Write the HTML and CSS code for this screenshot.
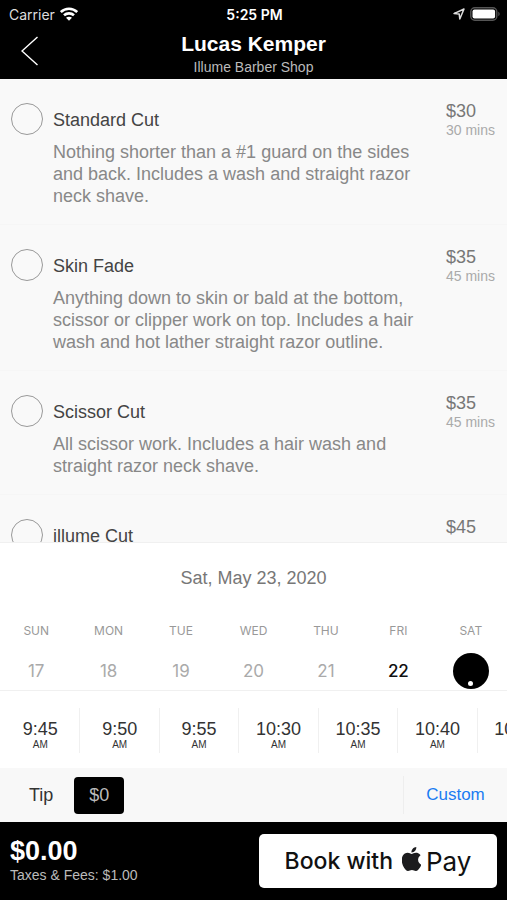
FILE: index.html
```html
<!DOCTYPE html>
<html lang="en">
<head>
<meta charset="utf-8">
<meta name="viewport" content="width=device-width, initial-scale=1">
<title>Lucas Kemper – Illume Barber Shop</title>
<link rel="stylesheet" href="styles.css">
</head>
<body>
<header class="header">
  <div class="status">
    <div class="status-side">
      <span>Carrier</span>
      <svg class="wifi" viewBox="0 0 18 14" aria-hidden="true">
        <g fill="none" stroke="#fff" stroke-width="2.6">
          <path d="M.8 5C5.400.600 12.600.600 17.200 5"/>
          <path d="M4 8.300c2.800-2.600 7.200-2.600 10 0"/>
        </g>
        <path fill="#fff" d="M9 13.700 6 10.800c1.600-1.500 4.400-1.500 6 0z"/>
      </svg>
    </div>
    <span class="clock">5:25 PM</span>
    <div class="status-side status-right">
      <svg class="location" viewBox="0 0 12 12" aria-hidden="true"><path d="M1 5.600 11 1 6.800 11 6.200 6z" fill="none" stroke="#ddd" stroke-width="1.500" stroke-linejoin="round"/></svg>
      <svg class="battery" viewBox="0 0 30 14" aria-hidden="true">
        <rect x=".8" y=".8" width="26" height="12.400" rx="4" fill="none" stroke="#555" stroke-width="1.400"/>
        <rect x="2.500" y="2.500" width="22.600" height="9" rx="2" fill="#fff"/>
        <path d="M28.300 4.800c1.800.7 1.800 3.700 0 4.400z" fill="#555"/>
      </svg>
    </div>
  </div>
  <div class="nav">
    <button class="back" type="button" aria-label="Back">
      <svg viewBox="0 0 18 30" aria-hidden="true"><path d="M16.500 1 1 15l15.500 14" fill="none" stroke="#fff" stroke-width="1.400"/></svg>
    </button>
    <div class="heading">
      <h1>Lucas Kemper</h1>
      <p>Illume Barber Shop</p>
    </div>
  </div>
</header>

<main class="services">
  <label class="service">
    <input type="radio" name="service">
    <span class="info"><span class="name">Standard Cut</span><span class="desc">Nothing shorter than a #1 guard on the sides and back. Includes a wash and straight razor neck shave.</span></span>
    <span class="cost"><span class="price">$30</span><span class="mins">30 mins</span></span>
  </label>
  <label class="service">
    <input type="radio" name="service">
    <span class="info"><span class="name">Skin Fade</span><span class="desc">Anything down to skin or bald at the bottom, scissor or clipper work on top. Includes a hair wash and hot lather straight razor outline.</span></span>
    <span class="cost"><span class="price">$35</span><span class="mins">45 mins</span></span>
  </label>
  <label class="service">
    <input type="radio" name="service">
    <span class="info"><span class="name">Scissor Cut</span><span class="desc">All scissor work. Includes a hair wash and straight razor neck shave.</span></span>
    <span class="cost"><span class="price">$35</span><span class="mins">45 mins</span></span>
  </label>
  <label class="service">
    <input type="radio" name="service">
    <span class="info"><span class="name">illume Cut</span></span>
    <span class="cost"><span class="price">$45</span></span>
  </label>
</main>

<section class="calendar">
  <h2>Sat, May 23, 2020</h2>
  <div class="week">
    <span>SUN</span><span>MON</span><span>TUE</span><span>WED</span><span>THU</span><span>FRI</span><span>SAT</span>
  </div>
  <div class="days">
    <button type="button">17</button>
    <button type="button">18</button>
    <button type="button">19</button>
    <button type="button">20</button>
    <button type="button">21</button>
    <button type="button" class="open">22</button>
    <button type="button" class="selected" aria-label="Saturday 23"><i></i></button>
  </div>
</section>

<section class="times">
  <button type="button">9:45<small>AM</small></button>
  <button type="button">9:50<small>AM</small></button>
  <button type="button">9:55<small>AM</small></button>
  <button type="button">10:30<small>AM</small></button>
  <button type="button">10:35<small>AM</small></button>
  <button type="button">10:40<small>AM</small></button>
  <button type="button">10:45<small>AM</small></button>
</section>

<section class="tip">
  <span>Tip</span>
  <button type="button" class="amount">$0</button>
  <button type="button" class="custom">Custom</button>
</section>

<footer class="footer">
  <div class="total">
    <strong>$0.00</strong>
    <span>Taxes &amp; Fees: $1.00</span>
  </div>
  <button type="button" class="pay">
    <span class="book">Book with</span>
    <svg class="apple" viewBox="2.600 0 18.800 24" aria-hidden="true"><path fill="#1c1c1e" d="M12.152 6.896c-.948 0-2.415-1.078-3.960-1.040-2.040.027-3.910 1.183-4.961 3.014-2.117 3.675-.546 9.103 1.519 12.090 1.013 1.454 2.208 3.090 3.792 3.039 1.520-.065 2.090-.987 3.935-.987 1.831 0 2.350.987 3.960.948 1.637-.026 2.676-1.480 3.676-2.948 1.156-1.688 1.636-3.325 1.662-3.415-.039-.013-3.182-1.221-3.220-4.857-.026-3.040 2.480-4.494 2.597-4.559-1.429-2.090-3.623-2.324-4.390-2.376-2-.156-3.675 1.090-4.610 1.090zM15.530 3.830c.843-1.012 1.400-2.427 1.245-3.830-1.207.052-2.662.805-3.532 1.818-.780.896-1.454 2.338-1.273 3.714 1.338.104 2.715-.688 3.559-1.701"/></svg>
    <span class="brand">Pay</span>
  </button>
</footer>
</body>
</html>
```
FILE: styles.css
```css
* {
  box-sizing: border-box;
}

body {
  margin: 0;
  height: 100vh;
  display: flex;
  flex-direction: column;
  overflow: hidden;
  background: #fff;
  color: #333;
  font-family: "Liberation Sans", Arial, sans-serif;
}

button {
  margin: 0;
  padding: 0;
  border: 0;
  background: none;
  color: inherit;
  font: inherit;
}

h1, h2, p {
  margin: 0;
  font-weight: 400;
}

svg {
  display: block;
}

/* Header */
.header {
  flex: none;
  background: #000;
  color: #fff;
  padding-bottom: 1px;
}

.status {
  display: grid;
  grid-template-columns: 1fr auto 1fr;
  align-items: center;
  height: 28px;
  padding: 0 7px 0 9px;
  font-family: Inter, sans-serif;
  font-size: 13px;
}

.status-side {
  display: flex;
  align-items: center;
  gap: 5px;
  color: #ddd;
  font-size: 14px;
}

.status-right {
  justify-content: flex-end;
}

.clock {
  font-size: 14px;
  font-weight: 600;
}

.wifi {
  width: 18px;
  height: 14px;
}

.location {
  width: 12px;
  height: 12px;
}

.battery {
  width: 30px;
  height: 14px;
}

.nav {
  display: grid;
  grid-template-columns: 60px 1fr 60px;
  align-items: center;
  height: 50px;
}

.back {
  padding: 0 21px 4px;
}

.back svg {
  width: 18px;
  height: 30px;
}

.heading {
  padding-top: 2px;
  text-align: center;
}

.heading h1 {
  font-size: 21px;
  line-height: 26px;
  font-weight: 700;
}

.heading p {
  font-size: 14px;
  line-height: 20px;
  color: #bbb;
}

/* Services */
.services {
  flex: 1;
  min-height: 0;
  overflow: hidden;
  background: #f9f9f9;
}

.service {
  display: grid;
  grid-template-columns: 32px 1fr 51px;
  align-items: start;
  column-gap: 10px;
  padding: 21px 10px 17px 11px;
  border-bottom: 1px solid #f6f6f6;
}

.service input {
  appearance: none;
  width: 32px;
  height: 32px;
  margin: 3px 0 0;
  border: 1px solid #999;
  border-radius: 50%;
}

.service input:checked {
  background: #000;
}

.info {
  padding-right: 20px;
}

.name, .desc, .price, .mins {
  display: block;
}

.name {
  padding: 9px 0 10px;
  font-size: 18px;
  line-height: 22px;
  color: #444;
}

.desc {
  font-size: 18px;
  line-height: 22px;
  color: #888;
}

.price {
  font-size: 18px;
  line-height: 22px;
  color: #777;
}

.mins {
  font-size: 14px;
  line-height: 16px;
  color: #aaa;
  white-space: nowrap;
}

/* Calendar */
.calendar {
  flex: none;
  border-top: 1px solid #f0f0f0;
  border-bottom: 1px solid #f0f0f0;
  text-align: center;
}

.calendar h2 {
  padding: 24px 0 32px;
  font-size: 18px;
  line-height: 22px;
  color: #777;
}

.week, .days {
  display: grid;
  grid-template-columns: repeat(7, 1fr);
  justify-items: center;
  align-items: center;
  font-family: Inter, sans-serif;
}

.week {
  height: 18px;
  font-size: 12px;
  color: #999;
}

.days {
  height: 51px;
  padding-top: 12px;
  font-size: 17px;
  color: #aaa;
}

.open {
  color: #111;
  font-weight: 500;
}

.selected {
  display: flex;
  align-items: flex-end;
  justify-content: center;
  width: 36px;
  height: 36px;
  padding-bottom: 3px;
  border-radius: 50%;
  background: #000;
}

.selected i {
  width: 5px;
  height: 5px;
  border-radius: 50%;
  background: #fff;
}

/* Times */
.times {
  flex: none;
  display: flex;
  padding: 17px 0 15px 1px;
  overflow: hidden;
}

.times button {
  flex: 0 0 15.7%;
  height: 45px;
  padding-top: 8px;
  border-right: 1px solid #f0f0f0;
  font-size: 18px;
  line-height: 20px;
}

.times small {
  display: block;
  font-size: 10px;
  line-height: 12px;
}

/* Tip */
.tip {
  flex: none;
  display: flex;
  align-items: center;
  height: 54px;
  padding-left: 29px;
  background: #f8f8f8;
  font-size: 18px;
}

.amount {
  width: 50px;
  height: 37px;
  margin-left: 21px;
  border-radius: 4px;
  background: #000;
  color: #bbb;
}

.custom {
  width: 104px;
  height: 38px;
  margin-left: auto;
  border-left: 1px solid #eee;
  color: #1b7cf2;
  font-size: 17px;
}

/* Footer */
.footer {
  flex: none;
  display: flex;
  align-items: center;
  justify-content: space-between;
  height: 78px;
  padding: 0 10px;
  background: #000;
  color: #fff;
}

.total strong, .total span {
  display: block;
}

.total strong {
  font-size: 27px;
  line-height: 28px;
}

.total span {
  font-size: 14px;
  line-height: 20px;
  color: #bbb;
}

.pay {
  display: flex;
  align-items: center;
  justify-content: center;
  width: 238px;
  height: 54px;
  border-radius: 5px;
  background: #fff;
  color: #111;
  font-family: Inter, sans-serif;
  font-size: 23px;
}

.book {
  font-weight: 500;
}

.apple {
  width: 19px;
  height: 24px;
  margin: 0 5px 4px 9px;
}

.brand {
  font-size: 26px;
}
```
